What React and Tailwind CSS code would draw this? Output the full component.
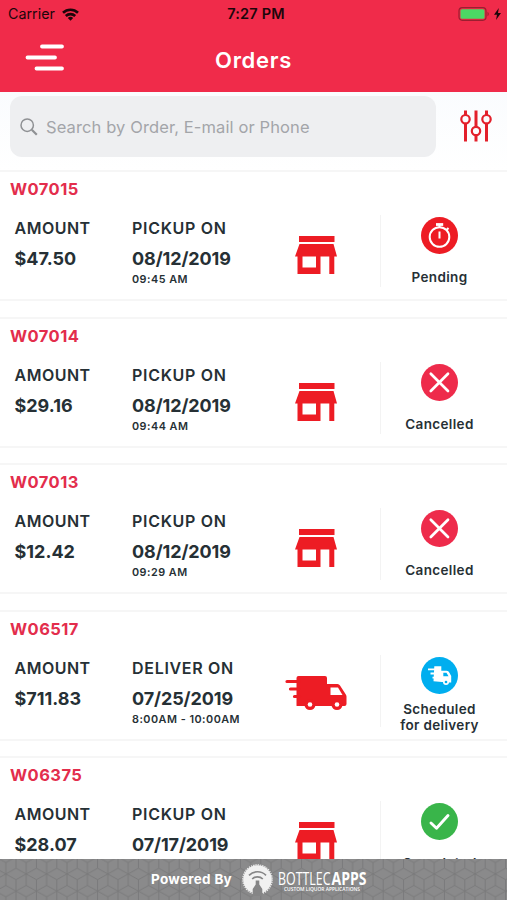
import React from "react";

const orders = [
  { id: "W07015", amount: "$47.50", label: "PICKUP ON", date: "08/12/2019", time: "09:45 AM", type: "pickup", status: "Pending" },
  { id: "W07014", amount: "$29.16", label: "PICKUP ON", date: "08/12/2019", time: "09:44 AM", type: "pickup", status: "Cancelled" },
  { id: "W07013", amount: "$12.42", label: "PICKUP ON", date: "08/12/2019", time: "09:29 AM", type: "pickup", status: "Cancelled" },
  { id: "W06517", amount: "$711.83", label: "DELIVER ON", date: "07/25/2019", time: "8:00AM - 10:00AM", type: "delivery", status: "Scheduled for delivery" },
  { id: "W06375", amount: "$28.07", label: "PICKUP ON", date: "07/17/2019", time: "", type: "pickup", status: "Completed" },
];

function StoreIcon() {
  return (
    <svg width="42" height="38" viewBox="0 0 42 38" fill="#ed1c24">
      <path d="M4 0h35.500v6H4z" />
      <path fillRule="evenodd" d="M4.500 8h34l3.500 12.500h-2.700V38h-5V20.500h-8.800V38H2.500V20.500H0zM7.500 20.500v11h13.500v-11z" />
    </svg>
  );
}

function TruckIcon() {
  return (
    <svg width="62" height="34" viewBox="0 0 62 34" fill="#ed1c24">
      <path d="M13.500 0H40a2 2 0 0 1 2 2v6h10.500a3 3 0 0 1 2.500 1.500l5.500 8.500a4 4 0 0 1 1 2.500V28a2 2 0 0 1-2 2H12a0.500 0.500 0 0 1-.5-.5V2a2 2 0 0 1 2-2z" />
      <path d="M2 5.500h12M5.500 13h8M9.500 20.500h5" stroke="#ed1c24" strokeWidth="3.200" strokeLinecap="round" />
      <path d="M45.500 11.500h7.500l4.500 7.500h-12z" fill="#fff" />
      <circle cx="25" cy="28.500" r="5.500" />
      <circle cx="52" cy="28.500" r="5.500" />
      <circle cx="25" cy="28.500" r="2.300" fill="#fff" />
      <circle cx="52" cy="28.500" r="2.300" fill="#fff" />
    </svg>
  );
}

function StatusIcon({ status }) {
  if (status === "Pending") {
    return (
      <svg width="37" height="37" viewBox="0 0 37 37" fill="none" stroke="#fff">
        <circle cx="18.500" cy="18.500" r="18.500" fill="#ed1c24" stroke="none" />
        <circle cx="18.500" cy="20" r="9.800" strokeWidth="2" />
        <path d="M15 7.500h7.200" strokeWidth="2.800" />
        <path d="M18.500 8v3M25.500 13l2-2" strokeWidth="2" />
        <path d="M18.500 14.500v7" strokeWidth="2" />
      </svg>
    );
  }
  if (status === "Cancelled") {
    return (
      <svg width="37" height="37" viewBox="0 0 37 37">
        <circle cx="18.500" cy="18.500" r="18.500" fill="#ee2b4b" />
        <path d="M9.800 9.800l17.200 17.200M27 9.800L9.800 27" stroke="#fff" strokeWidth="2.700" strokeLinecap="round" />
      </svg>
    );
  }
  if (status === "Completed") {
    return (
      <svg width="37" height="37" viewBox="0 0 37 37">
        <circle cx="18.500" cy="18.500" r="18.500" fill="#39b54a" />
        <path d="M10 20l5.500 5.200L27 12.500" fill="none" stroke="#fff" strokeWidth="2.900" strokeLinecap="round" strokeLinejoin="round" />
      </svg>
    );
  }
  return (
    <svg width="37" height="37" viewBox="0 0 37 37">
      <circle cx="18.500" cy="18.500" r="18.500" fill="#00aeef" />
      <path d="M13.300 9.300h7v4.400h5.200c1.500 0 2.300.8 2.900 2l1.800 3.300v6.500h-3.500l-14.200-1.200z" fill="#fff" />
      <path d="M7 12.300h7M9.500 16.500h5M11.500 20.700h4" stroke="#fff" strokeWidth="1.800" />
      <path d="M22.300 15.700h3.200l2 3.600h-5.200z" fill="#00aeef" />
      <circle cx="25" cy="25" r="3" fill="#fff" />
      <circle cx="25" cy="25" r="1.300" fill="#00aeef" />
    </svg>
  );
}

function OrderCard({ order }) {
  return (
    <div className="h-[131px] shrink-0 border-y-2 border-[#f6f6f6] bg-white">
      <p className="pl-[10px] pt-[7px] text-[16.5px] leading-[20px] font-bold tracking-[0.45px] text-[#e32d4c]">{order.id}</p>
      <div className="mt-[14px] flex text-[#263035]">
        <div className="w-[132px] pl-[14.5px] pt-[5px]">
          <p className="text-[16px] leading-[20px] font-semibold tracking-[0.5px]">AMOUNT</p>
          <p className="mt-[11px] text-[18px] leading-[20px] font-bold">{order.amount}</p>
        </div>
        <div className="w-[153px] pt-[5px]">
          <p className="text-[16px] leading-[20px] font-semibold tracking-[0.7px]">{order.label}</p>
          <p className="mt-[11px] text-[18px] leading-[20px] font-bold tracking-[-0.1px]">{order.date}</p>
          <p className="mt-[4px] text-[10.8px] leading-[14px] font-semibold tracking-[0.5px] whitespace-nowrap">{order.time}</p>
        </div>
        <div className="mt-[2px] flex h-[72px] w-[96px] justify-start border-r border-[#f3f3f3]">
          {order.type === "pickup" ? (
            <div className="ml-[10px] mt-[21px]"><StoreIcon /></div>
          ) : (
            <div className="mt-[21px]"><TruckIcon /></div>
          )}
        </div>
        <div className="flex w-[117px] flex-col items-center pt-[4px]">
          <StatusIcon status={order.status} />
          <p className={`w-[84px] text-center text-[13.5px] leading-[16.5px] font-semibold tracking-[0.35px] ${order.type === "delivery" ? "mt-[7px]" : "mt-[15px]"}`}>{order.status}</p>
        </div>
      </div>
    </div>
  );
}

function Header() {
  return (
    <header className="h-[92px] shrink-0 bg-[#f02b4a]">
      <div className="grid h-[28px] grid-cols-3 items-center pl-[8px] pr-[6px] text-[#1c060a]">
        <div className="flex items-center gap-[7px]">
          <span className="text-[14.3px]">Carrier</span>
          <svg width="17" height="13" viewBox="0 0 17 13" fill="none" stroke="currentColor" strokeWidth="2.600">
            <path d="M1 4.800a10.800 10.800 0 0 1 15 0" />
            <path d="M3.800 8a6.800 6.800 0 0 1 9.400 0" />
            <path d="M8.500 12.800L5.800 10a3.800 3.800 0 0 1 5.400 0z" fill="currentColor" stroke="none" />
          </svg>
        </div>
        <span className="pl-[3px] text-center text-[14.5px] font-semibold tracking-[0.2px] whitespace-nowrap">7:27 PM</span>
        <div className="flex items-center justify-end gap-[4px]">
          <svg width="32" height="14" viewBox="0 0 32 14">
            <rect x="1" y="0.700" width="27" height="12.600" rx="3.200" fill="none" stroke="#9a1f30" strokeWidth="1.200" />
            <rect x="2.500" y="2.200" width="24" height="9.600" rx="1.600" fill="#4cd964" />
            <path d="M29.500 4.800a2.500 2.500 0 0 1 0 4.400z" fill="#9a1f30" />
          </svg>
          <svg width="7" height="12" viewBox="0 0 7 12" fill="currentColor">
            <path d="M4.800 0L0 6.700h3L2 12l5-7H4z" />
          </svg>
        </div>
      </div>
      <div className="grid h-[64px] grid-cols-3 items-center pl-[25px] pr-[25px]">
        <svg className="mb-[5px]" width="39" height="27" viewBox="0 0 39 27" stroke="#fff" strokeWidth="3.800" strokeLinecap="round">
          <path d="M17 2.500h20M2.500 13.500h27.500M11.500 24.500h25.500" />
        </svg>
        <h1 className="text-center text-[22px] font-semibold tracking-[0.7px] text-white">Orders</h1>
      </div>
    </header>
  );
}

function SearchBar() {
  return (
    <div className="flex h-[78px] shrink-0 items-start bg-linear-to-b from-[#fafcfe] to-white pl-[10px] pt-[4px]">
      <div className="flex h-[61px] w-[426px] items-center rounded-[12px] bg-[#eeeff1] pl-[10px]">
        <svg width="18" height="18" viewBox="0 0 18 18" fill="none" stroke="#8f9194" strokeWidth="1.500">
          <circle cx="7.200" cy="7.200" r="6.200" />
          <path d="M11.800 11.800l5 5" strokeWidth="2.200" />
        </svg>
        <span className="pl-[8px] pt-[1px] text-[16.5px] tracking-[0.11px] text-[#a3a5a9]">Search by Order, E-mail or Phone</span>
      </div>
      <svg className="ml-[24px] mt-[14px]" width="32" height="32" viewBox="0 0 32 32" fill="none" stroke="#e3202b" strokeWidth="2.200">
        <path d="M5.500 .5v4.500M5.500 13v18.500M16 .5V17M16 25v6.500M26.500 .5v4.500M26.500 13v18.500" strokeWidth="3" />
        <circle cx="5.500" cy="9.200" r="4.200" />
        <circle cx="16" cy="21" r="4.200" />
        <circle cx="26.500" cy="9.200" r="4.200" />
      </svg>
    </div>
  );
}

function BottlecappsLogo() {
  return (
    <svg width="126" height="32" viewBox="0 0 126 32">
      <circle cx="15.500" cy="15.500" r="14.300" fill="#f1f1f1" />
      <circle cx="15.500" cy="15.500" r="14.700" fill="none" stroke="#f1f1f1" strokeWidth="1.200" strokeDasharray="1.300 1" />
      <path d="M13.700 16.500h3.600v4l3 4.500v7h-9.600v-7l3-4.500z" fill="#858586" />
      <path d="M7 11.300a12 12 0 0 1 17 0M10.200 15a7.500 7.500 0 0 1 10.600 0" fill="none" stroke="#858586" strokeWidth="1.700" />
      <g fill="#fff" fontFamily="'Open Sans', sans-serif">
        <text x="36" y="20.500" fontSize="17.500" textLength="52.500" lengthAdjust="spacingAndGlyphs">BOTTLEC</text>
        <text x="89.500" y="20.500" fontSize="17.500" fontWeight="700" textLength="35" lengthAdjust="spacingAndGlyphs">APPS</text>
        <text x="42" y="27" fontSize="4.500" fontWeight="600" textLength="76" lengthAdjust="spacingAndGlyphs">CUSTOM LIQUOR APPLICATIONS</text>
      </g>
    </svg>
  );
}

function Footer() {
  return (
    <footer className="relative h-[41px] shrink-0 overflow-hidden bg-[#8a8a8b]">
      <svg className="absolute inset-0" width="507" height="41">
        <defs>
          <pattern id="cubes" width="20.400" height="34.200" patternUnits="userSpaceOnUse" patternTransform="translate(5.800 9.300)">
            <path d="M10.200 0L20.400 5.700L10.200 11.400L0 5.700ZM10.200 11.400V34.200M0 5.700V17.100M20.400 5.700V17.100M0 28.500V34.200M20.400 28.500V34.200M0 0V5.700M20.400 0V5.700M0 17.100L10.200 22.800L0 28.500M20.400 17.100L10.200 22.800L20.400 28.500" fill="none" stroke="#78787a" strokeWidth="0.900" />
          </pattern>
        </defs>
        <rect width="507" height="41" fill="url(#cubes)" />
      </svg>
      <div className="relative flex h-full items-center pl-[151px]">
        <span className="w-[91px] text-[13.5px] font-bold tracking-[0.3px] whitespace-nowrap text-white">Powered By</span>
        <BottlecappsLogo />
      </div>
    </footer>
  );
}

export default function App() {
  return (
    <div className="flex h-[900px] w-[507px] flex-col overflow-hidden bg-white font-['Inter',sans-serif]">
      <Header />
      <SearchBar />
      <main className="flex min-h-0 flex-1 flex-col gap-[15.5px] overflow-hidden">
        {orders.map((o) => <OrderCard key={o.id} order={o} />)}
      </main>
      <Footer />
    </div>
  );
}
